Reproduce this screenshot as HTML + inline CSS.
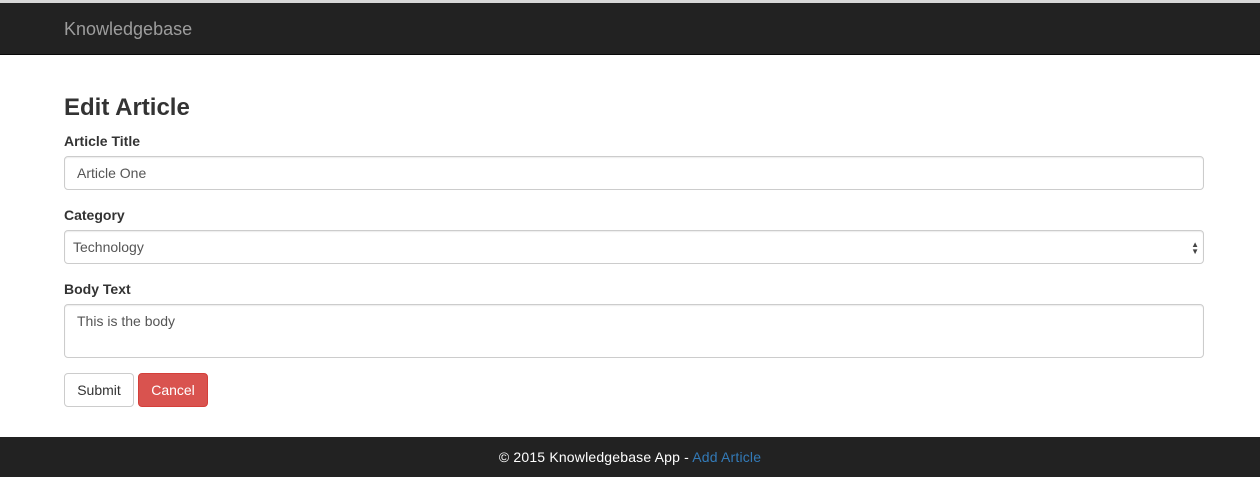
<!DOCTYPE html>
<html><head><style>
*{box-sizing:border-box}
body{margin:0;font-family:"Liberation Sans",Arial,sans-serif;font-size:14px;color:#333;background:#fff;width:1260px;height:477px;overflow:hidden;position:relative}
.top{height:3px;background:#d8d8d8}
.nav{height:52px;background:#222;border-bottom:1px solid #080808}
.brand{position:absolute;left:64px;top:19px;font-size:18px;color:#9d9d9d}
h1{position:absolute;left:64px;top:95px;margin:0;font-size:24px;font-weight:bold;line-height:26px}
label{position:absolute;left:64px;font-weight:bold;font-size:14px}
.in{position:absolute;left:64px;width:1140px;border:1px solid #ccc;border-radius:4px;box-shadow:inset 0 1px 1px rgba(0,0,0,.075);padding:0 12px;line-height:32px;color:#555}
.btn{position:absolute;top:373px;height:34px;border-radius:4px;line-height:32px;text-align:center;font-size:14px}
.foot{position:absolute;left:0;top:437px;width:1260px;height:40px;background:#222;color:#fff;text-align:center;line-height:40px;letter-spacing:0.18px}
</style></head><body>
<div class="top"></div><div class="nav"></div>
<div class="brand">Knowledgebase</div>
<h1>Edit Article</h1>
<label style="top:133px">Article Title</label>
<div class="in" style="top:156px;height:34px">Article One</div>
<label style="top:207px">Category</label>
<div class="in" style="top:230px;height:34px;padding-left:8px;background:#fff">Technology<span style="position:absolute;right:4px;top:0;font-size:8px;line-height:7px;padding-top:10px;color:#444">▲<br>▼</span></div>
<label style="top:281px">Body Text</label>
<div class="in" style="top:304px;height:54px;line-height:20px;padding-top:6px">This is the body</div>
<div class="btn" style="left:64px;width:70px;border:1px solid #ccc;background:#fff">Submit</div>
<div class="btn" style="left:138px;width:70px;border:1px solid #d43f3a;background:#d9534f;color:#fff">Cancel</div>
<div class="foot">© 2015 Knowledgebase App - <span style="color:#337ab7">Add Article</span></div>
</body></html>
